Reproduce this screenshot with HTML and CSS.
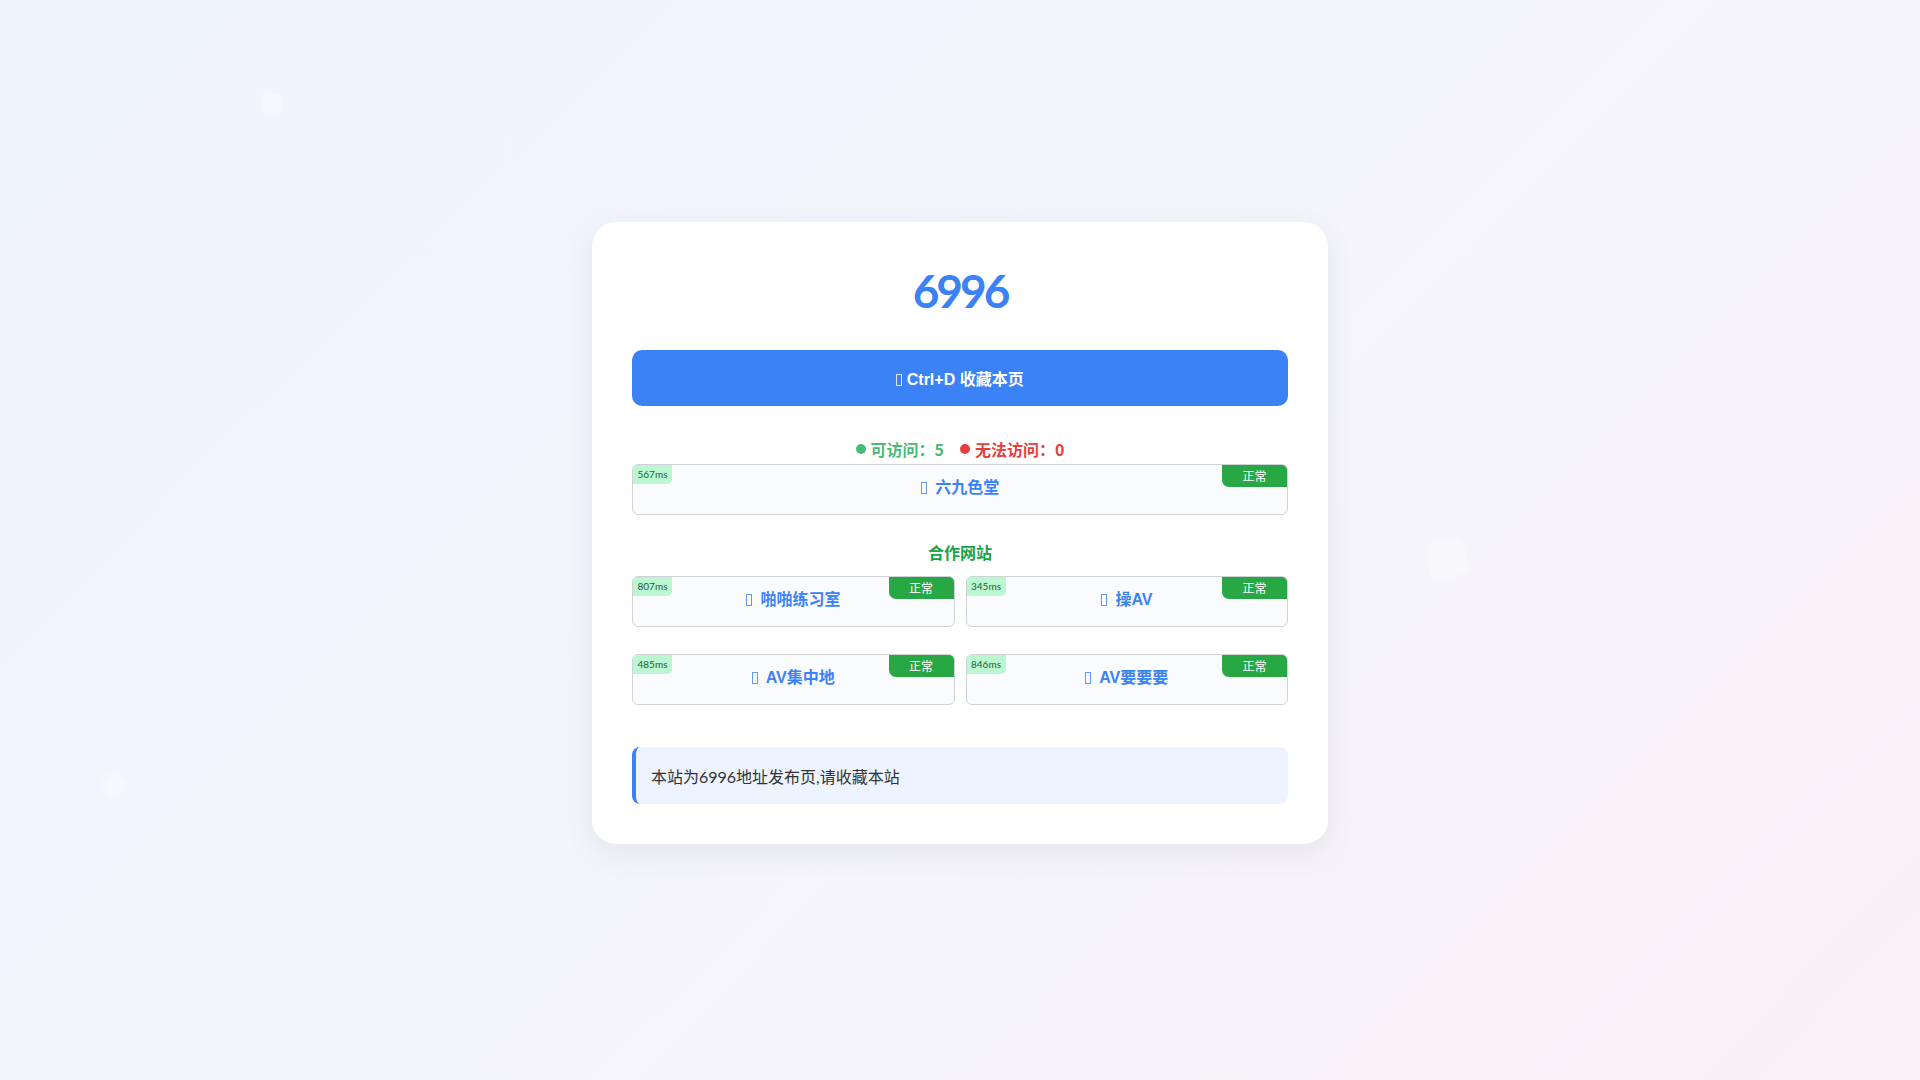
FILE: index.html
```html
<!DOCTYPE html>
<html lang="zh-CN">
<head>
<meta charset="utf-8">
<title>6996</title>
<link rel="stylesheet" href="styles.css">
</head>
<body>
<div class="deco deco-1"></div>
<div class="deco deco-2"></div>
<div class="deco deco-3"></div>
<main class="panel">
  <h1 class="title">6996</h1>
  <button class="fav-btn"><span class="tofu"></span> Ctrl+D 收藏本页</button>
  <div class="stats">
    <span class="stat ok"><span class="dot"></span>可访问：5</span>
    <span class="stat bad"><span class="dot"></span>无法访问：0</span>
  </div>
  <a class="site" href="#">
    <span class="ms">567ms</span>
    <span class="state">正常</span>
    <span class="name"><span class="tofu"></span> 六九色堂</span>
  </a>
  <h2 class="section">合作网站</h2>
  <div class="grid">
    <a class="site" href="#">
      <span class="ms">807ms</span>
      <span class="state">正常</span>
      <span class="name"><span class="tofu"></span> 啪啪练习室</span>
    </a>
    <a class="site" href="#">
      <span class="ms">345ms</span>
      <span class="state">正常</span>
      <span class="name"><span class="tofu"></span> 操AV</span>
    </a>
    <a class="site" href="#">
      <span class="ms">485ms</span>
      <span class="state">正常</span>
      <span class="name"><span class="tofu"></span> AV集中地</span>
    </a>
    <a class="site" href="#">
      <span class="ms">846ms</span>
      <span class="state">正常</span>
      <span class="name"><span class="tofu"></span> AV要要要</span>
    </a>
  </div>
  <div class="notice">本站为6996地址发布页,请收藏本站</div>
</main>
</body>
</html>
```

FILE: styles.css
```css
* { box-sizing: border-box; }
html, body { height: 100%; }
body {
  margin: 0;
  min-height: 100vh;
  background: linear-gradient(135deg, #eef4ff 0%, #f4f5fb 50%, #f9f2f6 100%);
  font-family: "Lato", "Noto Sans CJK SC", sans-serif;
  color: #333;
  display: flex;
  justify-content: center;
  align-items: flex-start;
  padding-top: 222px;
  position: relative;
  overflow: hidden;
}
.deco {
  position: absolute;
  background: rgba(255,255,255,0.4);
  border-radius: 4px;
  filter: blur(1.5px);
}
.deco-1 { left: 261px; top: 93px; width: 20px; height: 20px; }
.deco-2 { left: 1428px; top: 540px; width: 38px; height: 38px; transform: rotate(-12deg); border-radius: 6px; background: rgba(255,255,255,0.35); }
.deco-3 { left: 102px; top: 773px; width: 24px; height: 24px; border-radius: 50%; filter: blur(3px); }

.panel {
  width: 736px;
  background: #fff;
  border-radius: 24px;
  padding: 40px;
  box-shadow: 0 10px 30px rgba(60, 60, 100, 0.08);
  position: relative;
  z-index: 1;
}
.title {
  margin: 0;
  text-align: center;
  color: #3b82f6;
  font-size: 46px;
  line-height: 58px;
  font-weight: 700;
  letter-spacing: -3px;
  font-family: "Lato", sans-serif;
}
.fav-btn {
  display: block;
  width: 100%;
  height: 56px;
  margin-top: 30px;
  border: none;
  border-radius: 10px;
  background: #3b82f6;
  color: #fff;
  font-family: "Liberation Sans", "Noto Sans CJK SC", sans-serif;
  font-weight: 700;
  font-size: 16px;
  cursor: pointer;
}
.tofu {
  display: inline-block;
  width: 6px;
  height: 12px;
  border: 1px solid currentColor;
  opacity: 0.8;
  vertical-align: -1px;
}
.stats {
  margin-top: 31px;
  display: flex;
  justify-content: center;
  gap: 16px;
  font-size: 16px;
  line-height: 24px;
  font-weight: 700;
  font-family: "Noto Sans CJK SC", sans-serif;
}
.stat { display: inline-flex; align-items: center; gap: 5px; }
.dot { width: 10px; height: 10px; border-radius: 50%; background: currentColor; }
.ok { color: #48bb78; }
.bad { color: #e53e3e; }

.site {
  display: block;
  position: relative;
  height: 51px;
  border: 1px solid #cfd3d8;
  border-radius: 6px;
  background: #f9fbfd;
  text-decoration: none;
  text-align: center;
  padding-top: 11px;
  margin-top: 3px;
  overflow: hidden;
}
.ms {
  position: absolute;
  left: 0;
  top: 0;
  width: 39px;
  height: 19px;
  background: #bbf7d0;
  color: #1f5f36;
  font-size: 10px;
  line-height: 19px;
  border-bottom-right-radius: 5px;
  font-family: "Lato", sans-serif;
}
.state {
  position: absolute;
  right: 0;
  top: 0;
  width: 65px;
  height: 22px;
  background: #28a745;
  color: #fff;
  font-size: 12px;
  line-height: 22px;
  border-bottom-left-radius: 7px;
  font-family: "Noto Sans CJK SC", sans-serif;
}
.name {
  display: inline-block;
  color: #3b82f6;
  font-weight: 700;
  font-size: 16px;
  line-height: 24px;
  font-family: "Liberation Sans", "Noto Sans CJK SC", sans-serif;
}
.name .tofu { margin-right: 4px; }
.section {
  margin: 25px 0 0;
  text-align: center;
  color: #16a34a;
  font-size: 16px;
  line-height: 24px;
  font-weight: 700;
  font-family: "Noto Sans CJK SC", sans-serif;
}
.grid {
  margin-top: 12px;
  display: grid;
  grid-template-columns: 1fr 1fr;
  column-gap: 11px;
  row-gap: 27px;
}
.grid .site { margin-top: 0; }
.notice {
  margin-top: 42px;
  height: 57px;
  background: #eef4ff;
  border-left: 4px solid #3b82f6;
  border-radius: 8px;
  padding: 0 15px;
  display: flex;
  align-items: center;
  font-size: 16px;
  color: #333;
  font-family: "Lato", "Noto Sans CJK SC", sans-serif;
}
```
